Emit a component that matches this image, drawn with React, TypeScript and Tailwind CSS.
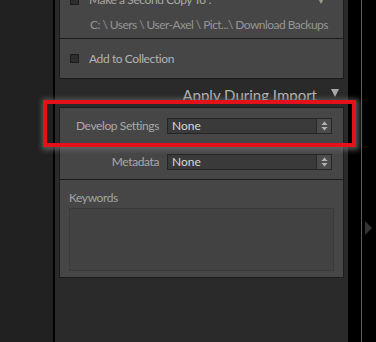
import { FC } from 'react';

const Stepper: FC = () => (
  <div className="flex w-[15px] items-center justify-center bg-[#4c4c4c] border-l border-[#2a2a2a]">
    <svg width="7" height="10" viewBox="0 0 7 10">
      <path d="M3.5 0.5 L6.5 4 L0.5 4 Z" fill="#b4b4b4" />
      <path d="M3.5 9.5 L6.5 6 L0.5 6 Z" fill="#b4b4b4" />
    </svg>
  </div>
);

const SelectRow: FC<{ label: string; value: string }> = ({ label, value }) => (
  <div className="flex h-[36px] items-center">
    <div className="w-[99px] whitespace-nowrap text-right text-[12px] tracking-[-0.4px] text-[#a9a9a9]">{label}</div>
    <div className="ml-[8px] flex h-[16px] w-[165px] border border-[#252525] bg-[#3a3a3a]">
      <div className="flex-1 pl-[4px] text-[12px] leading-[14px] text-[#d8d8d8]">{value}</div>
      <Stepper />
    </div>
  </div>
);

export default function App() {
  return (
    <div
      className="relative flex h-[342px] w-[376px] overflow-hidden bg-black"
      style={{ fontFamily: 'Lato, "Open Sans", sans-serif' }}
    >
      {/* left filmstrip area */}
      <div className="w-[53px] bg-[#212121]" />
      <div className="w-[2px] bg-black" />

      {/* right panel */}
      <div className="w-[293px] bg-[#2a2a2a] px-[4px]">
        <div className="-mt-[12px] border border-[#1b1b1b] bg-[#464646] divide-y divide-[#1b1b1b]">
          <div className="pb-[2px]">
            <div className="relative flex h-[22px] items-center pl-[10px]">
              <div className="h-[9px] w-[9px] border border-[#1c1c1c] bg-[#2e2e2e]" />
              <span className="ml-[10px] whitespace-nowrap text-[12px] tracking-[-0.4px] text-[#a8a8a8]">Make a Second Copy To :</span>
              <span className="absolute right-[18px] top-[6px] text-[8px] text-[#9a9a9a]">▼</span>
            </div>
            <div className="flex h-[25px] items-center whitespace-nowrap pl-[30px] pt-[3px] text-[12px] tracking-[-0.55px] text-[#959595]">
              C: \ Users \ User-Axel \ Pict...\ Download Backups
            </div>
          </div>
          <div className="flex h-[39px] items-center pl-[10px]">
            <div className="h-[9px] w-[9px] border border-[#1c1c1c] bg-[#2e2e2e]" />
            <span className="ml-[10px] whitespace-nowrap text-[12px] tracking-[-0.4px] text-[#b3b3b3]">Add to Collection</span>
          </div>
        </div>

        <div className="flex h-[28px] items-center justify-end pr-[5px] pt-[4px]">
          <span className="text-[15px] text-[#b5b5b5]">Apply During Import</span>
          <svg className="ml-[14px] -mt-[4px]" width="8" height="9" viewBox="0 0 8 9">
            <path d="M0 0 L8 0 L4 8 Z" fill="#a8a8a8" />
          </svg>
        </div>

        <div className="border border-[#1b1b1b] bg-[#464646] divide-y divide-[#1b1b1b]">
          <SelectRow label="Develop Settings" value="None" />
          <SelectRow label="Metadata" value="None" />
          <div className="px-[9px] pb-[6px] pt-[10px]">
            <div className="h-[16px] text-[12px] leading-[16px] tracking-[-0.4px] text-[#a3a3a3]">Keywords</div>
            <div className="mt-[2px] h-[63px] border border-[#3a3a3a] bg-[#424242]" />
          </div>
        </div>
      </div>

      {/* right edge */}
      <div className="w-[13px] bg-black" />
      <div className="w-[1px] bg-[#5c5c5c]" />
      <div className="relative flex-1 bg-black">
        <svg className="absolute left-[3px] top-[221px]" width="7" height="14" viewBox="0 0 7 14">
          <path d="M0 0 L7 7 L0 14 Z" fill="#333333" />
        </svg>
      </div>

      {/* red highlight annotation */}
      <div className="pointer-events-none absolute left-[43px] top-[100px] h-[47px] w-[313px] border-[4px] border-[#e3121a] shadow-[1px_1px_5px_2px_rgba(110,110,110,0.75)]" />
    </div>
  );
}
